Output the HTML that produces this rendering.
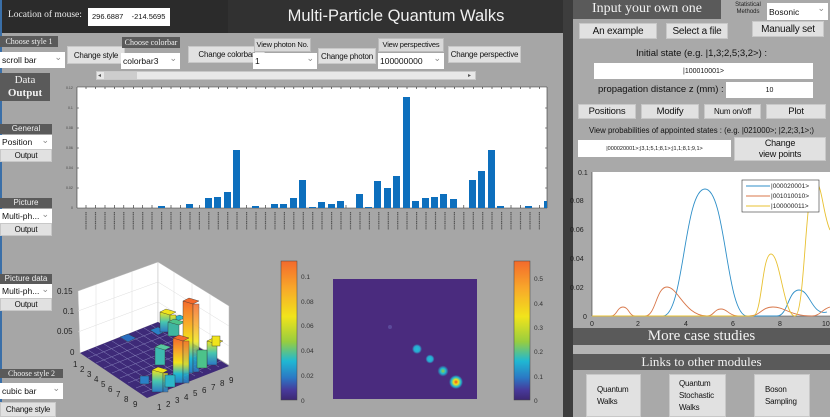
<!DOCTYPE html>
<html><head><meta charset="utf-8"><style>
*{margin:0;padding:0;box-sizing:border-box}
body{width:830px;height:417px;overflow:hidden;background:#a6a6a6;font-family:"Liberation Sans",sans-serif;position:relative}
.a{position:absolute}
.lbl{position:absolute;background:#5a5a5a;color:#f0f0f0;font-family:"Liberation Serif",serif;font-size:8px;text-align:center;line-height:11px;white-space:nowrap;overflow:hidden}
.lbl2{position:absolute;background:#d9d9d9;border:1px solid #bbb;color:#111;font-size:7.5px;text-align:center;line-height:12px;white-space:nowrap;overflow:hidden;letter-spacing:-.2px}
.btn{position:absolute;background:#e1e1e1;border:1px solid #c8c8c8;color:#111;font-size:8px;text-align:center;display:flex;align-items:center;justify-content:center;white-space:nowrap;letter-spacing:-.2px}
.sel{position:absolute;background:#fff;color:#111;font-size:8.5px;padding-left:2px;display:flex;align-items:center;white-space:nowrap}
.sel:after{content:"⌄";position:absolute;right:3px;top:0;color:#888;font-size:9px}
.inp{position:absolute;background:#fff;color:#111;font-size:7px;text-align:center;display:flex;align-items:center;justify-content:center;white-space:nowrap}
.band{position:absolute;background:#5a5a5a;color:#f2f2f2;font-family:"Liberation Serif",serif;text-align:center;white-space:nowrap}
</style></head><body>
<div class="a" style="left:0;top:0;width:228px;height:33px;background:#2b2b2b"></div>
<div class="a" style="left:228px;top:0;width:336px;height:33px;background:#313131"></div>
<div class="a" style="left:8px;top:10px;color:#eee;font-family:'Liberation Serif',serif;font-size:9.5px">Location of mouse:</div>
<div class="a" style="left:88px;top:8px;width:82px;height:18px;background:#fff;font-size:7.5px;line-height:18px;padding-left:4px;color:#111;white-space:nowrap;overflow:hidden">296.6887&nbsp;&nbsp;&nbsp;&nbsp;-214.5695</div>
<div class="a" style="left:228px;top:7px;width:336px;text-align:center;color:#f0f0f0;font-size:16.5px">Multi-Particle Quantum Walks</div>
<div class="a" style="left:0;top:0;width:2px;height:417px;background:#3a6fa8"></div>
<div class="lbl" style="left:0;top:36px;width:58px">Choose style 1</div>
<div class="sel" style="left:0;top:52px;width:65px;height:16px">scroll bar</div>
<div class="btn" style="left:67px;top:46px;width:58px;height:18px">Change style</div>
<div class="lbl" style="left:122px;top:37px;width:58px">Choose colorbar</div>
<div class="sel" style="left:121px;top:53px;width:59px;height:16px">colorbar3</div>
<div class="btn" style="left:188px;top:46px;width:77px;height:17px">Change colorbar</div>
<div class="lbl2" style="left:254px;top:38px;width:57px;height:14px">View photon No.</div>
<div class="sel" style="left:253px;top:53px;width:64px;height:16px">1</div>
<div class="btn" style="left:318px;top:48px;width:58px;height:16px">Change photon</div>
<div class="lbl2" style="left:378px;top:38px;width:66px;height:14px">View perspectives</div>
<div class="sel" style="left:378px;top:53px;width:66px;height:16px">100000000</div>
<div class="btn" style="left:448px;top:46px;width:73px;height:17px">Change perspective</div>
<div class="a" style="left:96px;top:71px;width:380px;height:9px;background:#e8e8e8;border:1px solid #c8c8c8"></div>
<div class="a" style="left:104px;top:72px;width:33px;height:7px;background:#cdcdcd"></div>
<div class="a" style="left:98px;top:72px;font-size:6px;color:#555">◂</div>
<div class="a" style="left:468px;top:72px;font-size:6px;color:#555">▸</div>
<div class="band" style="left:0;top:73px;width:50px;height:28px;font-size:11px;line-height:13px;padding-top:1px">Data<br><b>Output</b></div>
<div class="lbl" style="left:0;top:124px;width:52px;height:10px;line-height:10px;font-family:'Liberation Sans',sans-serif">General</div>
<div class="sel" style="left:0;top:135px;width:52px;height:14px">Position</div>
<div class="btn" style="left:0;top:149px;width:52px;height:13px">Output</div>
<div class="lbl" style="left:0;top:198px;width:52px;height:10px;line-height:10px;font-family:'Liberation Sans',sans-serif">Picture</div>
<div class="sel" style="left:0;top:209px;width:52px;height:14px">Multi-ph...</div>
<div class="btn" style="left:0;top:223px;width:52px;height:13px">Output</div>
<div class="lbl" style="left:0;top:274px;width:52px;height:10px;line-height:10px;font-family:'Liberation Sans',sans-serif">Picture data</div>
<div class="sel" style="left:0;top:284px;width:52px;height:14px">Multi-ph...</div>
<div class="btn" style="left:0;top:298px;width:52px;height:13px">Output</div>
<div class="lbl" style="left:0;top:369px;width:63px;height:9px;line-height:9px">Choose style 2</div>
<div class="sel" style="left:0;top:383px;width:63px;height:16px">cubic bar</div>
<div class="btn" style="left:0;top:402px;width:56px;height:15px">Change style</div>

<svg class="a" style="left:0;top:0" width="565" height="417" viewBox="0 0 565 417">
<defs>
<linearGradient id="cb" x1="0" y1="0" x2="0" y2="1">
<stop offset="0" stop-color="#f46a2c"/><stop offset=".2" stop-color="#f8a92a"/><stop offset=".4" stop-color="#f1e41b"/><stop offset=".58" stop-color="#98cd3f"/><stop offset=".72" stop-color="#1fb8d3"/><stop offset=".84" stop-color="#2b78c4"/><stop offset=".93" stop-color="#47399a"/><stop offset="1" stop-color="#3d2872"/></linearGradient>
<linearGradient id="bg1" x1="0" y1="0" x2="0" y2="1"><stop offset="0" stop-color="#f1e41b"/><stop offset=".5" stop-color="#47c6b0"/><stop offset="1" stop-color="#2b78c4"/></linearGradient>
<linearGradient id="bg2" x1="0" y1="0" x2="0" y2="1"><stop offset="0" stop-color="#f46a2c"/><stop offset=".3" stop-color="#f8a92a"/><stop offset=".55" stop-color="#f1e41b"/><stop offset=".8" stop-color="#1fb8d3"/><stop offset="1" stop-color="#2b78c4"/></linearGradient>
<radialGradient id="d1"><stop offset="0" stop-color="#f04a20"/><stop offset=".35" stop-color="#f1e41b"/><stop offset=".7" stop-color="#1fb8d3"/><stop offset="1" stop-color="#4a2b7e"/></radialGradient>
<radialGradient id="d2"><stop offset="0" stop-color="#9fcf3b"/><stop offset=".5" stop-color="#1fb8d3"/><stop offset="1" stop-color="#4a2b7e"/></radialGradient>
<radialGradient id="d3"><stop offset="0" stop-color="#1fc0d8"/><stop offset=".6" stop-color="#2aa8d0"/><stop offset="1" stop-color="#4a2b7e"/></radialGradient>
</defs>
<rect x="77" y="87" width="470" height="121" fill="#fff"/>
<g stroke="#333" stroke-width=".6">
<line x1="77" y1="208" x2="547" y2="208"/><line x1="77" y1="87" x2="547" y2="87"/>
<line x1="77" y1="87" x2="77" y2="208"/><line x1="547" y1="87" x2="547" y2="208"/>
</g>
<g fill="#0d6fbd">
<rect x="158" y="206" width="7" height="2"/><rect x="186" y="204" width="7" height="4"/>
<rect x="205" y="198" width="7" height="10"/><rect x="214" y="197" width="7" height="11"/>
<rect x="224" y="192" width="7" height="16"/><rect x="233" y="150" width="7" height="58"/>
<rect x="252" y="206" width="7" height="2"/><rect x="271" y="204" width="7" height="4"/>
<rect x="280" y="204" width="7" height="4"/><rect x="290" y="198" width="7" height="10"/>
<rect x="299" y="180" width="7" height="28"/><rect x="309" y="207" width="7" height="1"/>
<rect x="318" y="202" width="7" height="6"/><rect x="328" y="204" width="7" height="4"/>
<rect x="337" y="201" width="7" height="7"/><rect x="356" y="194" width="7" height="14"/>
<rect x="365" y="207" width="7" height="1"/><rect x="374" y="181" width="7" height="27"/>
<rect x="384" y="188" width="7" height="20"/><rect x="393" y="176" width="7" height="32"/>
<rect x="403" y="97" width="7" height="111"/><rect x="412" y="201" width="7" height="7"/>
<rect x="422" y="198" width="7" height="10"/><rect x="431" y="197" width="7" height="11"/>
<rect x="440" y="194" width="7" height="14"/><rect x="450" y="199" width="7" height="9"/>
<rect x="469" y="180" width="7" height="28"/><rect x="478" y="171" width="7" height="37"/>
<rect x="488" y="150" width="7" height="58"/><rect x="497" y="206" width="7" height="2"/>
<rect x="525" y="206" width="7" height="2"/><rect x="544" y="201" width="3" height="7"/>
</g>
<g stroke="#222" stroke-width=".6">
<path d="M86 87v2M95.5 87v2M105 87v2M114.4 87v2M123.8 87v2M133.3 87v2M142.7 87v2M152 87v2M161.6 87v2M171 87v2M180.5 87v2M190 87v2M199.4 87v2M208.8 87v2M218.3 87v2M227.7 87v2M237 87v2M246.6 87v2M256 87v2M265.5 87v2M275 87v2M284.4 87v2M293.8 87v2M303.3 87v2M312.7 87v2M322 87v2M331.6 87v2M341 87v2M350.5 87v2M360 87v2M369.4 87v2M378.8 87v2M388.3 87v2M397.7 87v2M407 87v2M416.6 87v2M426 87v2M435.5 87v2M445 87v2M454.4 87v2M463.8 87v2M473.3 87v2M482.7 87v2M492 87v2M501.6 87v2M511 87v2M520.5 87v2M530 87v2M539.4 87v2"/>
<path d="M86 208v-3M95.5 208v-3M105 208v-3M114.4 208v-3M123.8 208v-3M133.3 208v-3M142.7 208v-3M152 208v-3M171 208v-3M180.5 208v-3M199.4 208v-3M246.6 208v-3M265.5 208v-3M346 208v-3M463.8 208v-3M511 208v-3M520.5 208v-3M539.4 208v-3"/>
<path d="M77 108h2M77 128h2M77 148h2M77 168h2M77 188h2M547 108h-2M547 128h-2M547 148h-2M547 168h-2M547 188h-2"/>
</g>
<g font-size="3.5" fill="#444">
<text x="66" y="89">0.12</text><text x="68" y="109">0.1</text><text x="66" y="129">0.08</text><text x="66" y="149">0.06</text><text x="66" y="169">0.04</text><text x="66" y="189">0.02</text><text x="71" y="209">0</text>
</g>
<g stroke="#555" stroke-width="1.2" stroke-dasharray="1.2 .6">
<path d="M86 212v18M95.5 212v18M105 212v18M114.4 212v18M123.8 212v18M133.3 212v18M142.7 212v18M152 212v18M161.6 212v18M171 212v18M180.5 212v18M190 212v18M199.4 212v18M208.8 212v18M218.3 212v18M227.7 212v18M237 212v18M246.6 212v18M256 212v18M265.5 212v18M275 212v18M284.4 212v18M293.8 212v18M303.3 212v18M312.7 212v18M322 212v18M331.6 212v18M341 212v18M350.5 212v18M360 212v18M369.4 212v18M378.8 212v18M388.3 212v18M397.7 212v18M407 212v18M416.6 212v18M426 212v18M435.5 212v18M445 212v18M454.4 212v18M463.8 212v18M473.3 212v18M482.7 212v18M492 212v18M501.6 212v18M511 212v18M520.5 212v18M530 212v18M539.4 212v18"/>
</g>

<polygon points="78,291 158,262 158,322 80,353" fill="#fff" stroke="#bbb" stroke-width=".5"/>
<polygon points="158,262 229,306 229,365 158,322" fill="#fff" stroke="#bbb" stroke-width=".5"/>
<g stroke="#ddd" stroke-width=".5">
<path d="M78 311L158 282M78 332L158 302M158 282L229 326M158 302L229 346M96 285v62M114 278v60M132 272v59M174 272v60M192 283v60M210 294v60"/>
</g>
<polygon points="80,353 158,322 229,366 147,398" fill="#3e2a78"/>
<g stroke="#9a9acc" stroke-width=".5" opacity=".8">
<path d="M88 358L166 327M96 363L174 332M104 368L182 337M112 373L190 342M120 378L198 347M128 383L206 352M136 388L214 357M142 393L221 361"/>
<path d="M88 350L155 392M96 347L163 389M104 344L171 386M112 341L179 383M120 337L187 380M128 334L195 376M136 331L203 373M144 328L211 370M151 325L219 367"/>
</g>
<g stroke="#333" stroke-width=".4">
<polygon points="120,337 128,334 136,338 128,342" fill="#2a6fc0"/>
<polygon points="150,330 158,327 166,331 158,335" fill="#2a80c7"/>
<polygon points="170,318 180,315 186,318 176,321" fill="#2db6c9"/>
<rect x="160" y="312" width="10" height="20" fill="url(#bg1)"/><polygon points="160,312 166,309 176,312 170,315" fill="#f1e41b"/>
<rect x="170" y="315" width="6" height="20" fill="url(#bg1)"/>
<rect x="168" y="322" width="11" height="14" fill="#3fb6a0"/><polygon points="168,322 174,319 185,322 179,325" fill="#4cc38a"/>
<rect x="183" y="301" width="10" height="72" fill="url(#bg2)"/><polygon points="183,301 189,298 199,301 193,304" fill="#f46a2c"/>
<rect x="193" y="304" width="6" height="68" fill="url(#bg2)" opacity=".85"/>
<rect x="173" y="338" width="10" height="45" fill="url(#bg2)"/><polygon points="173,338 179,335 189,338 183,341" fill="#f46a2c"/>
<rect x="183" y="341" width="6" height="42" fill="url(#bg2)" opacity=".85"/>
<rect x="155" y="347" width="10" height="18" fill="#3dbab0"/><polygon points="155,347 161,344 171,347 165,350" fill="#58c9a0"/>
<rect x="152" y="370" width="11" height="22" fill="url(#bg1)"/><polygon points="152,370 158,367 168,370 163,373" fill="#f1e41b"/>
<rect x="163" y="373" width="5" height="19" fill="url(#bg1)" opacity=".85"/>
<rect x="165" y="375" width="10" height="12" fill="#2db6c9"/>
<rect x="207" y="341" width="10" height="24" fill="url(#bg1)"/><polygon points="207,341 213,338 223,341 217,344" fill="#f1e41b"/>
<rect x="197" y="350" width="10" height="18" fill="#4cc38a"/>
<rect x="212" y="336" width="8" height="10" fill="#f1e41b"/>
<rect x="140" y="376" width="9" height="8" fill="#2a80c7"/>
</g>
<g font-size="8" fill="#222">
<text x="57" y="294">0.15</text><text x="63" y="314">0.1</text><text x="57" y="334">0.05</text><text x="70" y="355">0</text>
<text x="73" y="367">1</text><text x="80" y="372">2</text><text x="87" y="377">3</text><text x="94" y="382">4</text><text x="101" y="387">5</text><text x="108" y="392">6</text><text x="116" y="397">7</text><text x="124" y="402">8</text><text x="133" y="407">9</text>
<text x="157" y="410">1</text><text x="166" y="407">2</text><text x="175" y="403">3</text><text x="184" y="400">4</text><text x="193" y="396">5</text><text x="202" y="393">6</text><text x="211" y="390">7</text><text x="220" y="386">8</text><text x="229" y="383">9</text>
</g>
<rect x="281" y="261" width="16" height="139" fill="url(#cb)" stroke="#444" stroke-width=".5"/>
<rect x="514" y="261" width="16" height="139" fill="url(#cb)" stroke="#444" stroke-width=".5"/>
<g font-size="6.5" fill="#333">
<text x="301" y="279">0.1</text><text x="301" y="304">0.08</text><text x="301" y="328">0.06</text><text x="301" y="353">0.04</text><text x="301" y="378">0.02</text><text x="301" y="403">0</text>
<text x="534" y="281">0.5</text><text x="534" y="306">0.4</text><text x="534" y="330">0.3</text><text x="534" y="354">0.2</text><text x="534" y="379">0.1</text><text x="534" y="403">0</text>
</g>
<rect x="333" y="279" width="144" height="120" fill="#4a2b7e"/>
<circle cx="390" cy="327" r="2" fill="#5b4a9a"/>
<circle cx="417" cy="349" r="5" fill="url(#d3)"/>
<circle cx="430" cy="359" r="4.5" fill="url(#d3)"/>
<circle cx="443" cy="371" r="5.5" fill="url(#d2)"/>
<circle cx="456" cy="382" r="7" fill="url(#d1)"/>
</svg>

<div class="a" style="left:563px;top:0;width:10px;height:417px;background:#3d3d3d"></div>
<div class="a" style="left:573px;top:0;width:257px;height:417px;background:#a9a9a9"></div>
<div class="band" style="left:573px;top:0;width:148px;height:19px;font-size:14px;line-height:18px">Input your own one</div>
<div class="a" style="left:733px;top:2px;width:30px;font-size:6px;line-height:7px;color:#222;text-align:center">Statistical Methods</div>
<div class="sel" style="left:767px;top:3px;width:61px;height:17px">Bosonic</div>
<div class="btn" style="left:579px;top:23px;width:78px;height:16px;font-size:10px">An example</div>
<div class="btn" style="left:666px;top:23px;width:62px;height:16px;font-size:10px">Select a file</div>
<div class="btn" style="left:752px;top:21px;width:72px;height:16px;font-size:10px">Manually set</div>
<div class="a" style="left:573px;top:48px;width:257px;text-align:center;font-size:9.5px;color:#111">Initial state (e.g. |1,3;2,5;3,2&gt;) :</div>
<div class="inp" style="left:594px;top:63px;width:219px;height:16px">|100010001&gt;</div>
<div class="a" style="left:598px;top:84px;font-size:9.5px;color:#111">propagation distance z (mm) :</div>
<div class="inp" style="left:726px;top:82px;width:87px;height:16px">10</div>
<div class="btn" style="left:578px;top:104px;width:58px;height:15px;font-size:9.5px">Positions</div>
<div class="btn" style="left:641px;top:104px;width:58px;height:15px;font-size:9.5px">Modify</div>
<div class="btn" style="left:704px;top:104px;width:57px;height:15px;font-size:8px">Num on/off</div>
<div class="btn" style="left:766px;top:104px;width:60px;height:15px;font-size:9.5px">Plot</div>
<div class="a" style="left:573px;top:126px;width:257px;text-align:center;font-size:7.8px;color:#111;white-space:nowrap">View probabilities of appointed states : (e.g. |021000&gt;; |2,2;3,1&gt;;)</div>
<div class="inp" style="left:578px;top:140px;width:153px;height:17px;font-size:5.5px">|000020001&gt;;|3,1;5,1;8,1&gt;;|1,1;8,1;9,1&gt;</div>
<div class="btn" style="left:734px;top:137px;width:92px;height:24px;font-size:9px;line-height:11px;white-space:normal">Change<br>view points</div>
<svg class="a" style="left:565px;top:160px" width="265" height="170" viewBox="565 160 265 170">
<rect x="592" y="172" width="238" height="144" fill="#fff"/>
<line x1="592" y1="316" x2="830" y2="316" stroke="#333" stroke-width=".6"/>
<line x1="592" y1="172" x2="592" y2="316" stroke="#333" stroke-width=".6"/>
<g font-size="7" fill="#222">
<text x="578" y="175">0.1</text><text x="570" y="203">0.08</text><text x="570" y="232">0.06</text><text x="570" y="261">0.04</text><text x="570" y="290">0.02</text><text x="583" y="319">0</text>
<text x="590" y="326">0</text><text x="636" y="326">2</text><text x="684" y="326">4</text><text x="731" y="326">6</text><text x="778" y="326">8</text><text x="822" y="326">10</text>
</g>
<g fill="none" stroke-width=".9">
<path d="M592 316H663C684 316 684 189 705 189C726 189 726 316 747 316H777C788 316 788 290 799 290C810 290 812 316 827 312" stroke="#2f8fc8"/>
<path d="M592 316H611C617 316 617 307 623 307C629 307 629 316 635 316H645C656 316 656 287 667 287C678 287 685 316 707 316C714 316 714 309 721 309C728 309 728 316 740 316H749C761 316 761 307 773 307C785 307 790 316 812 316C820 316 822 309 830 307" stroke="#d8774a"/>
<path d="M592 316H753C762 316 762 254 771 254C780 254 784 316 795 316C805 316 805 182 815 182C822 182 823 215 830 230" stroke="#e8c030"/>
</g>
<rect x="742" y="180" width="77" height="32" fill="#fff" stroke="#333" stroke-width=".6"/>
<g stroke-width=".9"><line x1="746" y1="186" x2="770" y2="186" stroke="#2f8fc8"/><line x1="746" y1="196" x2="770" y2="196" stroke="#d8774a"/><line x1="746" y1="206" x2="770" y2="206" stroke="#e8c030"/></g>
<g font-size="6.5" fill="#222"><text x="771" y="188">|000020001&gt;</text><text x="771" y="198">|001010010&gt;</text><text x="771" y="208">|100000011&gt;</text></g>
</svg>
<div class="band" style="left:573px;top:328px;width:257px;height:17px;font-size:15px;line-height:17px">More case studies</div>
<div class="a" style="left:573px;top:345px;width:257px;height:9px;background:#b4b4b4"></div>
<div class="band" style="left:573px;top:354px;width:257px;height:16px;font-size:13px;line-height:16px">Links to other modules</div>
<div class="btn" style="left:586px;top:374px;width:55px;height:43px;font-size:8px;line-height:12px;justify-content:flex-start;padding-left:10px;text-align:left">Quantum<br>Walks</div>
<div class="btn" style="left:669px;top:374px;width:57px;height:43px;font-size:8px;line-height:12px;justify-content:flex-start;padding-left:9px;text-align:left">Quantum<br>Stochastic<br>Walks</div>
<div class="btn" style="left:754px;top:374px;width:56px;height:43px;font-size:8px;line-height:12px;justify-content:flex-start;padding-left:10px;text-align:left">Boson<br>Sampling</div>
</body></html>
